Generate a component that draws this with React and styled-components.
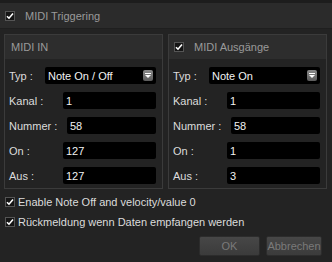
import React from "react";
import styled, { createGlobalStyle } from "styled-components";

const Global = createGlobalStyle`
  html, body { margin: 0; padding: 0; background: #232323; }
  body { font-family: "Liberation Sans", Arial, sans-serif; font-size: 11px; }
`;

const Page = styled.div`
  width: 332px;
  height: 262px;
  background: #232323;
  overflow: hidden;
`;

const TopStrip = styled.div`
  height: 3px;
  background: #1d1d1d;
`;

const Header = styled.div`
  height: 25px;
  background: #2b2b2b;
  border-bottom: 1px solid #1f1f1f;
  display: flex;
  align-items: center;
  padding-left: 5px;
  gap: 10px;
  color: #9a9a9a;
  font-size: 11px;
`;

const Groups = styled.div`
  display: grid;
  grid-template-columns: 159px 159px;
  gap: 5px;
  padding: 5px 0 0 4px;
`;

const Group = styled.div`
  border: 1px solid #3b3b3b;
  height: 155px;
  box-sizing: border-box;
`;

const GroupHead = styled.div`
  height: 24px;
  background: #2d2d2d;
  display: flex;
  align-items: center;
  gap: 10px;
  padding-left: ${p => (p.$check ? 5 : 6)}px;
  color: #9a9a9a;
  font-size: 11px;
`;

const GroupBody = styled.div`
  display: flex;
  flex-direction: column;
  gap: 8px;
  padding: 8px 6px 0 4px;
`;

const Row = styled.div`
  display: flex;
  align-items: center;
  height: 17px;
`;

const Label = styled.span`
  width: ${p => p.$w}px;
  flex-shrink: 0;
  color: #dcdcdc;
  font-size: 11px;
`;

const Field = styled.div`
  flex: 1;
  height: 17px;
  background: #000;
  border-radius: 2px;
  color: #f2f2f2;
  font-size: 11px;
  display: flex;
  align-items: center;
  justify-content: space-between;
  padding: 0 3px;
  box-sizing: border-box;
`;

const DropBtn = styled.span`
  width: 10px;
  height: 11px;
  border-radius: 2px;
  background: linear-gradient(#8a8a8a, #5c5c5c);
  display: flex;
  align-items: center;
  justify-content: center;
`;

const Options = styled.div`
  display: flex;
  flex-direction: column;
  gap: 8px;
  padding: 7px 0 0 5px;
`;

const Option = styled.div`
  display: flex;
  align-items: center;
  gap: 3px;
  color: #dcdcdc;
  font-size: 11px;
  height: 12px;
`;

const Box = styled.span`
  width: 10px;
  height: 10px;
  box-sizing: border-box;
  border: 1px solid #555;
  background: #151515;
  display: flex;
  align-items: center;
  justify-content: center;
  flex-shrink: 0;
`;

const Buttons = styled.div`
  display: flex;
  justify-content: flex-end;
  gap: 6px;
  margin-top: 8px;
  padding-right: 10px;
`;

const Button = styled.div`
  width: ${p => p.$w}px;
  height: 20px;
  box-sizing: border-box;
  border: 1px solid #2c2c2c;
  border-radius: 2px;
  background: linear-gradient(#474747, #3b3b3b);
  color: #7a7a7a;
  font-size: 11px;
  display: flex;
  align-items: center;
  justify-content: center;
`;

function Check() {
  return (
    <Box>
      <svg width="8" height="8" viewBox="0 0 8 8">
        <path d="M1 4.2 L3 6.2 L7 1.6" stroke="#fff" strokeWidth="1.6" fill="none" />
      </svg>
    </Box>
  );
}

function Arrow() {
  return (
    <DropBtn>
      <svg width="6" height="5" viewBox="0 0 6 5">
        <rect x="0" y="0" width="6" height="1" fill="#fff" />
        <path d="M0 2 L6 2 L3 5 Z" fill="#fff" />
      </svg>
    </DropBtn>
  );
}

function Fields({ typ, values }) {
  return (
    <GroupBody>
      <Row>
        <Label $w={36}>Typ :</Label>
        <Field>{typ}<Arrow /></Field>
      </Row>
      <Row>
        <Label $w={54}>Kanal :</Label>
        <Field>{values[0]}</Field>
      </Row>
      <Row>
        <Label $w={58}>Nummer :</Label>
        <Field>{values[1]}</Field>
      </Row>
      <Row>
        <Label $w={54}>On :</Label>
        <Field>{values[2]}</Field>
      </Row>
      <Row>
        <Label $w={54}>Aus :</Label>
        <Field>{values[3]}</Field>
      </Row>
    </GroupBody>
  );
}

export default function App() {
  return (
    <Page>
      <Global />
      <TopStrip />
      <Header>
        <Check />
        MIDI Triggering
      </Header>
      <Groups>
        <Group>
          <GroupHead>MIDI IN</GroupHead>
          <Fields typ="Note On / Off" values={["1", "58", "127", "127"]} />
        </Group>
        <Group>
          <GroupHead $check>
            <Check />
            MIDI Ausgänge
          </GroupHead>
          <Fields typ="Note On" values={["1", "58", "1", "3"]} />
        </Group>
      </Groups>
      <Options>
        <Option><Check />Enable Note Off and velocity/value 0</Option>
        <Option><Check />Rückmeldung wenn Daten empfangen werden</Option>
      </Options>
      <Buttons>
        <Button $w={61}>OK</Button>
        <Button $w={56}>Abbrechen</Button>
      </Buttons>
    </Page>
  );
}
